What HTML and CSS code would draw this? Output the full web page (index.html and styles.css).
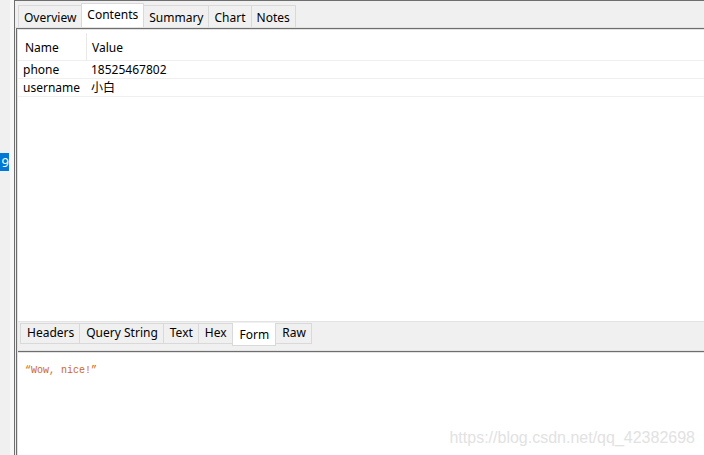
FILE: index.html
```html
<!DOCTYPE html>
<html>
<head>
<meta charset="utf-8">
<link rel="stylesheet" href="styles.css">
</head>
<body>
<div class="app">
  <aside class="side"><div class="badge">9</div></aside>
  <div class="main">
    <div class="tabs top-tabs">
      <div class="tab">Overview</div>
      <div class="tab active">Contents</div>
      <div class="tab">Summary</div>
      <div class="tab">Chart</div>
      <div class="tab">Notes</div>
    </div>
    <div class="panel">
      <div class="table-area">
        <div class="kv-head">
          <div class="kh kh-name">Name</div>
          <div class="kh kh-value">Value</div>
        </div>
        <div class="kv-row"><div class="kc kc-name">phone</div><div class="kc kc-value">18525467802</div></div>
        <div class="kv-row"><div class="kc kc-name">username</div><div class="kc kc-value">小白</div></div>
      </div>
      <div class="tabs bottom-tabs">
        <div class="tab">Headers</div>
        <div class="tab">Query String</div>
        <div class="tab">Text</div>
        <div class="tab">Hex</div>
        <div class="tab active">Form</div>
        <div class="tab">Raw</div>
      </div>
      <div class="body-area">
        <div class="form-text">“Wow, nice!”</div>
      </div>
    </div>
  </div>
  <div class="watermark">https://blog.csdn.net/qq_42382698</div>
</div>
</body>
</html>
```
FILE: styles.css
```css
* { box-sizing: border-box; }
html, body { margin: 0; padding: 0; }
body {
  width: 704px;
  height: 455px;
  overflow: hidden;
  background: #f0f0f0;
  font-family: "Noto Sans", "Noto Sans CJK SC", sans-serif;
  font-size: 12px;
  color: #000;
}
.app {
  position: relative;
  display: flex;
  width: 704px;
  height: 455px;
}
.side {
  width: 14px;
  flex: none;
  background: #f0f0f0;
  border-right: 4px solid #f8f8f8;
  padding-top: 153px;
}
.badge {
  width: 9px;
  height: 18px;
  background: #0078d7;
  color: #fff;
  font-size: 13px;
  line-height: 18px;
  text-align: right;
  overflow: hidden;
}
.main {
  flex: 1;
  display: flex;
  flex-direction: column;
  border-left: 1px solid #6e6e6e;
  border-top: 1px solid #6e6e6e;
  min-width: 0;
}
.tabs {
  display: flex;
  background: #f0f0f0;
  flex: none;
}
.tab {
  border: 1px solid #d9d9d9;
  margin-left: -1px;
  padding: 0 5px;
  white-space: nowrap;
  background: #f0f0f0;
}
.tab:first-child { margin-left: 0; }
.top-tabs {
  height: 27px;
  padding-left: 3px;
  align-items: flex-end;
  border-bottom: 1px solid #e3e3e3;
}
.top-tabs .tab {
  height: 22px;
  line-height: 21px;
  padding-top: 1px;
  border-bottom: none;
}
.top-tabs .tab.active {
  height: 24px;
  line-height: 20px;
  padding: 1px 5px 0;
  background: #fff;
  position: relative;
  z-index: 1;
}
.panel {
  flex: 1;
  display: flex;
  flex-direction: column;
  margin-left: 1px;
  border-left: 1px solid #6e6e6e;
  border-top: 1px solid #6e6e6e;
  box-shadow: inset 1px 1px 0 #e3e3e3;
  min-height: 0;
}
.table-area {
  height: 292px;
  flex: none;
  margin: 1px 0 0 1px;
  background: #fff;
  border-bottom: 1px solid #e3e3e3;
}
.kv-head, .kv-row {
  display: grid;
  grid-template-columns: 69px 1fr;
  border-bottom: 1px solid #efefef;
}
.kv-head {
  height: 31px;
  padding-top: 3px;
}
.kh {
  line-height: 26px;
  padding-top: 2px;
}
.kh-name {
  padding-left: 7px;
  border-right: 1px solid #e8e8e8;
}
.kh-value { padding-left: 5px; }
.kv-row { height: 18px; }
.kc { line-height: 17px; }
.kc-name { padding-left: 5px; }
.kc-value { padding-left: 4px; }
.bottom-tabs {
  height: 29px;
  padding: 1px 0 0 2px;
  align-items: flex-start;
  border-bottom: 1px solid #e3e3e3;
  margin-left: 1px;
}
.bottom-tabs .tab {
  height: 21px;
  line-height: 18px;
  padding: 0 5px 0 6px;
}
.bottom-tabs .tab.active {
  height: 23px;
  line-height: 23px;
  padding: 0 6px 0 7px;
  background: #fff;
  border-top: none;
}
.body-area {
  flex: 1;
  margin-left: 1px;
  background: #fff;
  border-top: 1px solid #6e6e6e;
  box-shadow: inset 0 1px 0 #e3e3e3;
  padding: 13px 0 0 7px;
}
.form-text {
  font-family: "Liberation Mono", "DejaVu Sans Mono", monospace;
  font-size: 10px;
  line-height: 12px;
  color: #d0661e;
}
.watermark {
  position: absolute;
  right: 9px;
  bottom: 8px;
  font-family: "Liberation Sans", Arial, sans-serif;
  font-size: 16px;
  color: #e2e2e2;
  white-space: nowrap;
}
```
